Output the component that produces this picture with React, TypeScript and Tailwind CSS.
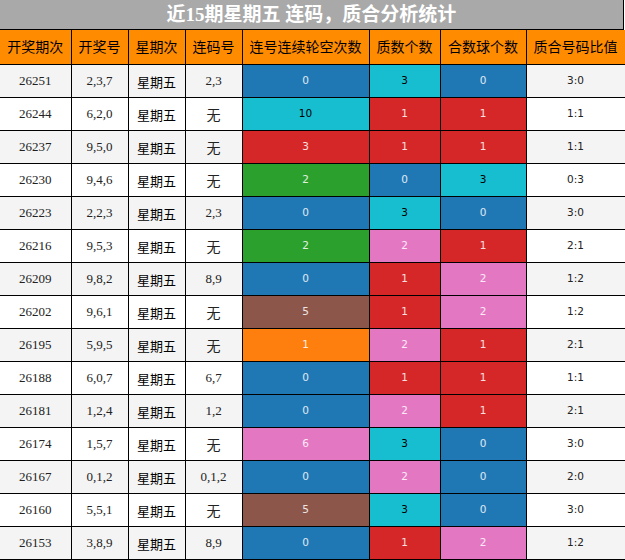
const rows: [string, string, string, number, number, number, string][] = [
  ["26251", "2,3,7", "2,3", 0, 3, 0, "3:0"],
  ["26244", "6,2,0", "无", 10, 1, 1, "1:1"],
  ["26237", "9,5,0", "无", 3, 1, 1, "1:1"],
  ["26230", "9,4,6", "无", 2, 0, 3, "0:3"],
  ["26223", "2,2,3", "2,3", 0, 3, 0, "3:0"],
  ["26216", "9,5,3", "无", 2, 2, 1, "2:1"],
  ["26209", "9,8,2", "8,9", 0, 1, 2, "1:2"],
  ["26202", "9,6,1", "无", 5, 1, 2, "1:2"],
  ["26195", "5,9,5", "无", 1, 2, 1, "2:1"],
  ["26188", "6,0,7", "6,7", 0, 1, 1, "1:1"],
  ["26181", "1,2,4", "1,2", 0, 2, 1, "2:1"],
  ["26174", "1,5,7", "无", 6, 3, 0, "3:0"],
  ["26167", "0,1,2", "0,1,2", 0, 2, 0, "2:0"],
  ["26160", "5,5,1", "无", 5, 3, 0, "3:0"],
  ["26153", "3,8,9", "8,9", 0, 1, 2, "1:2"],
];

const missColor: Record<number, string> = {
  0: "bg-[#1f77b4] text-white/85",
  1: "bg-[#ff7f0e] text-white/85",
  2: "bg-[#2ca02c] text-white/85",
  3: "bg-[#d62728] text-white/85",
  5: "bg-[#8c564b] text-white/85",
  6: "bg-[#e377c2] text-white/85",
  10: "bg-[#17becf] text-black",
};

const countColor: Record<number, string> = {
  0: "bg-[#1f77b4] text-white/85",
  1: "bg-[#d62728] text-white/85",
  2: "bg-[#e377c2] text-white/85",
  3: "bg-[#17becf] text-black",
};

const headers = ["开奖期次", "开奖号", "星期次", "连码号", "连号连续轮空次数", "质数个数", "合数球个数", "质合号码比值"];
const widths = [71, 57, 57, 57, 127, 71, 86, 99];

const serif = "font-['Liberation_Serif','Noto_Sans_CJK_SC',serif]";
const sans = "font-['DejaVu_Sans',sans-serif]";

export default function App() {
  return (
    <div className="w-[625px] h-[560px] overflow-hidden bg-white font-['Liberation_Serif','Noto_Sans_CJK_SC',serif]">
      <div className="h-[30px] w-[624px] bg-[#a9a9a9] text-white font-bold text-[19px] leading-[29px] text-center border-b border-r border-black">
        近15期星期五 连码，质合分析统计
      </div>
      <table className="table-fixed border-collapse w-[624px]">
        <colgroup>
          {widths.map((w, i) => (
            <col key={i} style={{ width: w }} />
          ))}
        </colgroup>
        <thead>
          <tr className="h-[34px]">
            {headers.map((h) => (
              <th key={h} className="border border-t-0 first:border-l-0 border-black bg-[#ff8c00] font-normal text-[14px] text-black font-['Noto_Sans_CJK_SC',sans-serif] p-0">
                {h}
              </th>
            ))}
          </tr>
        </thead>
        <tbody>
          {rows.map((r, i) => {
            const bg = i % 2 === 0 ? "bg-[#f4f4f4]" : "bg-white";
            const cell = `border border-black text-center p-0 ${bg}`;
            return (
              <tr key={r[0]} className="h-[33px]">
                <td className={`${cell} border-l-0 ${serif} text-[13px] text-[#222]`}>{r[0]}</td>
                <td className={`${cell} ${serif} text-[13px] text-[#222]`}>{r[1]}</td>
                <td className={`${cell} text-[13px] text-black font-['Noto_Sans_CJK_SC',sans-serif] pt-[2px]`}>星期五</td>
                <td className={`${cell} ${serif} text-[13px] text-[#222] ${r[2] === "无" ? "pt-[2px] text-[14px] font-['Noto_Sans_CJK_SC',sans-serif]" : ""}`}>{r[2]}</td>
                <td className={`border border-black text-center p-0 ${sans} text-[10.5px] ${missColor[r[3]]}`}>{r[3]}</td>
                <td className={`border border-black text-center p-0 ${sans} text-[10.5px] ${countColor[r[4]]}`}>{r[4]}</td>
                <td className={`border border-black text-center p-0 ${sans} text-[10.5px] ${countColor[r[5]]}`}>{r[5]}</td>
                <td className={`${cell} ${sans} text-[10.5px] text-[#222]`}>{r[6]}</td>
              </tr>
            );
          })}
        </tbody>
      </table>
    </div>
  );
}
